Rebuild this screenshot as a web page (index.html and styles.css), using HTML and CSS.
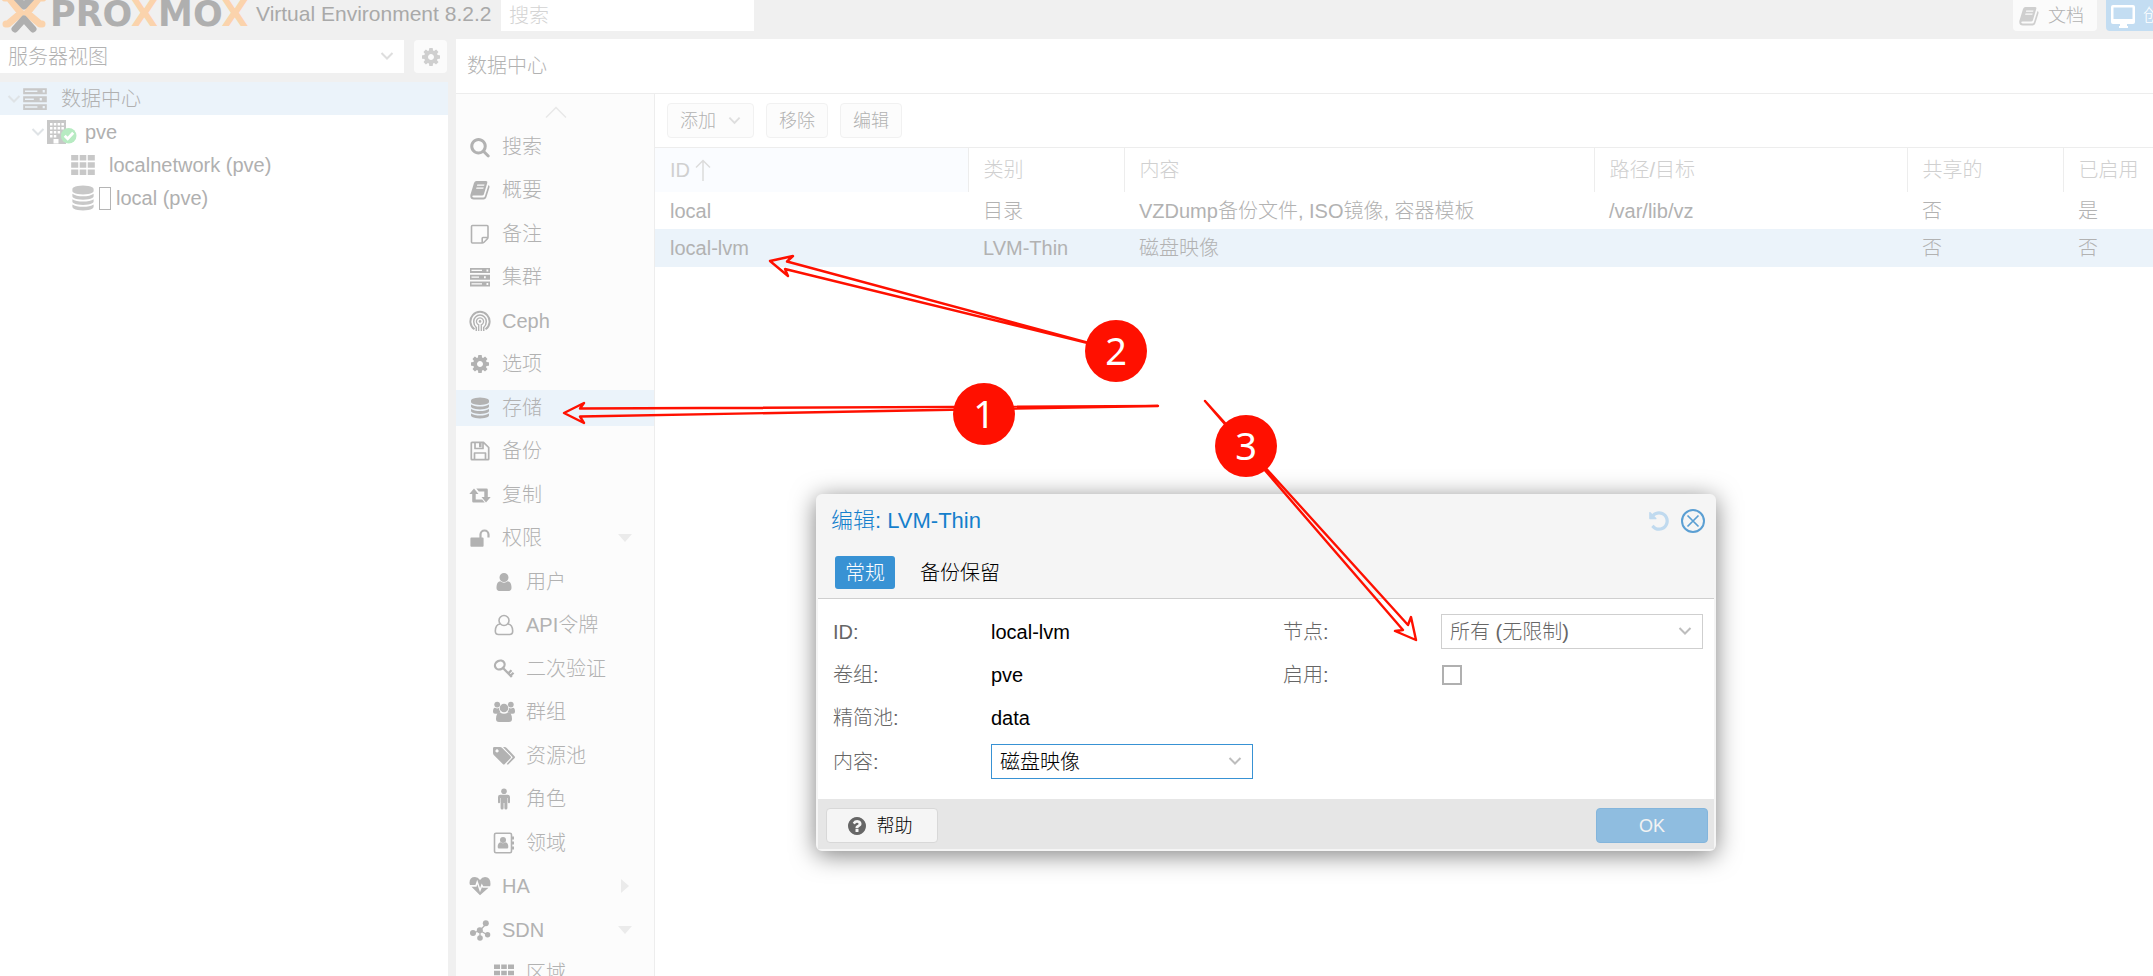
FILE: index.html
```html
<!DOCTYPE html>
<html lang="zh-CN">
<head>
<meta charset="utf-8">
<title>Proxmox Virtual Environment</title>
<link rel="stylesheet" href="styles.css">
</head>
<body>
<svg class="sprite" aria-hidden="true">
  <symbol id="chevron" viewBox="0 0 14 14"><path d="M1.5 4 7 9.5 12.500 4" fill="none" stroke="currentColor" stroke-width="2"/></symbol>
  <symbol id="search" viewBox="-43 -43 1878 1878"><path d="M1216 832q0-185-131.500-316.500t-316.500-131.500-316.500 131.500-131.500 316.500 131.500 316.500 316.500 131.500 316.500-131.500 131.500-316.500zm512 832q0 52-38 90t-90 38q-54 0-90-38l-343-342q-179 124-399 124-143 0-273.500-55.500t-225-150-150-225-55.500-273.500 55.500-273.500 150-225 225-150 273.500-55.500 273.500 55.500 225 150 150 225 55.500 273.500q0 220-124 399l343 343q37 37 37 90z"/></symbol>
  <symbol id="cog" viewBox="-43 -43 1878 1878"><path d="M1152 896q0-106-75-181t-181-75-181 75-75 181 75 181 181 75 181-75 75-181zm512-109v222q0 12-8 23t-20 13l-185 28q-19 54-39 91 35 50 107 138 10 12 10 25t-9 23q-27 37-99 108t-94 71q-12 0-26-9l-138-108q-44 23-91 38-16 136-29 186-7 28-36 28h-222q-14 0-24.500-8.500t-11.500-21.500l-28-184q-49-16-90-37l-141 107q-10 9-25 9-14 0-25-11-126-114-165-168-7-10-7-23 0-12 8-23 15-21 51-66.500t54-70.500q-27-50-41-99l-183-27q-13-2-21-12.500t-8-23.500v-222q0-12 8-23t19-13l186-28q14-46 39-92-40-57-107-138-10-12-10-24 0-10 9-23 26-36 98.500-107.500t94.500-71.500q13 0 26 10l138 107q44-23 91-38 16-136 29-186 7-28 36-28h222q14 0 24.500 8.500t11.500 21.500l28 184q49 16 90 37l142-107q9-9 24-9 13 0 25 10 129 119 165 170 7 8 7 22 0 12-8 23-15 21-51 66.500t-54 70.500q26 50 41 98l183 28q13 2 21 12.500t8 23.500z"/></symbol>
  <symbol id="database" viewBox="-43 -43 1878 1878"><path d="M896 768q237 0 443-43t325-127v170q0 69-103 128t-280 93.500-385 34.500-385-34.500-280-93.500-103-128v-170q119 84 325 127t443 43zm0 768q237 0 443-43t325-127v170q0 69-103 128t-280 93.500-385 34.500-385-34.500-280-93.500-103-128v-170q119 84 325 127t443 43zm0-384q237 0 443-43t325-127v170q0 69-103 128t-280 93.500-385 34.500-385-34.500-280-93.500-103-128v-170q119 84 325 127t443 43zm0-1152q208 0 385 34.500t280 93.500 103 128v128q0 69-103 128t-280 93.500-385 34.500-385-34.500-280-93.500-103-128v-128q0-69 103-128t280-93.500 385-34.500z"/></symbol>
  <symbol id="book" viewBox="0 0 22 22"><path fill-rule="evenodd" d="M7.500 2H17q1.800 0 1.300 1.800l-3.400 11.400Q14.500 16.500 13 16.500H4.500q-1.500 0-1.200 1 .3 1 1.700 1h9.300q1.200 0 1.600-1.200L19.500 6q1.400.8 1 2.200l-3.200 10.300Q16.600 20.500 14.500 20.500H4.800Q1.500 20.500 1.300 17.200q-.1-1.200.5-2.700L5 4Q5.700 2 7.500 2zM8.300 5.500 7.900 6.800h7.200l.4-1.300zM7.500 8.400 7.100 9.700h7.200l.4-1.300z"/></symbol>
  <symbol id="note" viewBox="0 0 22 22"><path fill="none" stroke="currentColor" stroke-width="1.600" stroke-linejoin="round" d="M19 14V3.600Q19 2.500 18 2.500H3.500q-1 0-1 1V19q0 1 1 1H13q1.200 0 2-.8L18.200 16q.8-.8.8-2zM19 14.500h-5q-.8 0-.8.800V20"/></symbol>
  <symbol id="server" viewBox="0 0 22 22"><path fill-rule="evenodd" d="M1 2h20v5H1zM2.500 3.800v1.300H13V3.800zM17.500 3.400v2h1.800v-2zM1 8.700h20v5H1zm1.500 1.800v1.300H10v-1.300zM15 10.200v2h1.800v-2zM1 15.400h20v5H1zm1.500 1.800v1.300H13v-1.300zM17.500 16.900v2h1.800v-2z"/></symbol>
  <symbol id="ceph" viewBox="0 0 22 22"><g fill="none" stroke="currentColor"><path stroke-width="2" d="M5.500 19.300A9.600 9.600 0 1 1 16.500 19.300"/><path stroke-width="1.500" d="M7.300 21v-3.500Q4.700 15 4.700 11.400a6.300 6.300 0 0 1 12.600 0q0 3.600-2.600 6.100V21"/><path stroke-width="1.300" d="M9.700 21v-6.200A3.600 3.600 0 1 1 12.300 14.800V21"/></g><circle cx="11" cy="11.400" r="1.300"/></symbol>
  <symbol id="save" viewBox="0 0 22 22"><path fill="none" stroke="currentColor" stroke-width="1.700" stroke-linejoin="round" d="M2.300 3q0-.7.7-.7h11.500L19.700 7.500V19q0 .7-.7.700H3q-.7 0-.7-.7zM6 2.500V8.500h8V2.500M5.500 19.500v-6.500h11v6.500"/><path d="M10 3h2.600v4.300H10z"/></symbol>
  <symbol id="retweet" viewBox="0 0 22 22"><path d="M5 4.500 9.500 10H6.700v5.500h6.500l2.600 3H4.500q-1.300 0-1.300-1.300V10H.3zM7.300 4.500H17.500q1.300 0 1.300 1.300V13h2.900L17 18.500 12.500 13h2.800V7.500H9.800z"/></symbol>
  <symbol id="unlock" viewBox="0 0 22 22"><path d="M2.400 10.500h11.200q1 0 1 1v7.300q0 1-1 1H2.400q-1 0-1-1v-7.300q0-1 1-1z"/><path fill="none" stroke="currentColor" stroke-width="2.200" d="M11.500 11V7.500a4 4 0 0 1 8 0V10.500"/></symbol>
  <symbol id="user" viewBox="-43 -43 1878 1878"><path d="M1536 1399q0 109-62.500 187t-150.500 78h-854q-88 0-150.500-78t-62.500-187q0-85 8.500-160.500t31.500-152 58.500-131 94-89 134.500-34.500q131 128 313 128t313-128q76 0 134.500 34.500t94 89 58.500 131 31.500 152 8.500 160.500zm-256-887q0 159-112.500 271.500t-271.500 112.500-271.500-112.500-112.500-271.500 112.500-271.500 271.500-112.500 271.500 112.500 112.500 271.500z"/></symbol>
  <symbol id="user-o" viewBox="0 0 22 22"><g fill="none" stroke="currentColor" stroke-width="1.600"><circle cx="11" cy="6.500" r="5"/><path d="M7 10q-4.500.5-4.700 7Q2.300 20.500 5.500 20.500h11q3.200 0 3.200-3.500-.2-6.500-4.700-7"/></g></symbol>
  <symbol id="key" viewBox="0 0 22 22"><ellipse cx="6.800" cy="7" rx="5" ry="4.200" transform="rotate(-30 6.800 7)" fill="none" stroke="currentColor" stroke-width="2.300"/><path fill="none" stroke="currentColor" stroke-width="2.300" d="M10 10 18.800 19M15.500 15.200l3-3M17.500 17.800l3-3"/></symbol>
  <symbol id="group" viewBox="0 0 22 22"><circle cx="4.200" cy="3.600" r="2.900"/><circle cx="17.800" cy="3.600" r="2.900"/><circle cx="11" cy="7" r="4.300"/><path d="M2 6.800q2 1.200 4 .3 0 2.600 1.500 4.200-2 0-3 1.500H2q-2 0-2-2Q0 7 2 6.800zM20 6.800q-2 1.200-4 .3 0 2.600-1.500 4.200 2 0 3 1.500H20q2 0 2-2 0-3.800-2-4zM7 11.500q4 2.600 8 0 4 .3 4 6.500 0 3-3 3H6q-3 0-3-3 0-6.200 4-6.500z"/></symbol>
  <symbol id="tags" viewBox="0 0 22 22"><path fill-rule="evenodd" d="M1.300 2H7q1.300 0 2.200.9l8.300 8.300q1 1 0 2L11.800 19q-1 1-2 0L1 10.300Q0 9.200 0 8V3.300Q0 2 1.300 2zM4 4.300a1.600 1.600 0 1 0 .1 0z"/><path d="M10 2h1.500q1.200 0 2.200.9l7.800 8.300q1 1 0 2L15.700 19q-1 1-2 0l6-6.700z"/></symbol>
  <symbol id="male" viewBox="0 0 22 22"><circle cx="11" cy="3.300" r="2.800"/><path d="M7.300 6.700h7.400q2.300 0 2.300 2.300v5q0 1.200-1 1.200t-1.100-1.200V10h-.5v10q0 1.500-1.500 1.500t-1.500-1.500v-5h-.8v5q0 1.500-1.500 1.500T7.600 20V10h-.5v4q0 1.200-1.100 1.200T5 14V9q0-2.300 2.300-2.300z"/></symbol>
  <symbol id="address" viewBox="0 0 22 22"><path fill="none" stroke="currentColor" stroke-width="1.600" d="M3 1.300h14q1.500 0 1.500 1.500v16.400q0 1.500-1.500 1.500H3q-1.500 0-1.500-1.500V2.800q0-1.500 1.500-1.500z"/><path d="M19 4.500h2v3h-2zM19 9.500h2v3h-2zM19 14.500h2v3h-2z"/><circle cx="10" cy="8" r="3"/><path d="M7.500 10.300q2.500 1.700 5 0 2.800.5 2.800 4.700 0 1.500-1.300 1.500H6q-1.300 0-1.300-1.500 0-4.200 2.800-4.700z"/></symbol>
  <symbol id="heart" viewBox="0 0 22 22"><path d="M11 5Q9 2 6 2 .5 2 .5 7.800q0 1 .5 2.200h5.400l1.800-5.300 2.900 8.300 1.600-4.400 1.600 2.600h6.800q.4-1.200.4-2.200Q21.500 2 16 2q-3 0-5 3z"/><path d="M2.500 11.800H7.500l.8-2.500 2.700 8 2-5.200.5.700h6l-8.500 7.500z"/></symbol>
  <symbol id="sdn" viewBox="0 0 22 22"><path fill="none" stroke="currentColor" stroke-width="1.300" d="M4 14 11 11.500 17 5M11 11.500 18.500 16M11 11.500V18"/><circle cx="4" cy="14" r="3"/><circle cx="10.800" cy="11.300" r="3"/><circle cx="16.800" cy="4.300" r="3"/><circle cx="18.600" cy="15.800" r="2.700"/><circle cx="11" cy="19" r="2.800"/></symbol>
  <symbol id="th" viewBox="0 0 22 22"><path d="M1 2.500h6v4.600H1zM8.200 2.500h5.600v4.600H8.200zM15 2.500h6v4.600h-6zM1 8.700h6v4.600H1zM8.200 8.700h5.600v4.600H8.200zM15 8.700h6v4.600h-6zM1 14.900h6v4.600H1zM8.200 14.900h5.600v4.600H8.200zM15 14.900h6v4.600h-6z"/></symbol>
  <symbol id="building" viewBox="0 0 31 26"><path fill-rule="evenodd" d="M1 1h19v24H1zM4 4v2.500h2.500V4zm3.800 0v2.500h2.500V4zm3.800 0v2.500h2.500V4zm3.800 0v2.500h2.500V4zM4 8v2.500h2.500V8zm3.800 0v2.500h2.500V8zm3.800 0v2.500h2.500V8zm3.800 0v2.500h2.500V8zM4 12v2.500h2.500V12zm3.800 0v2.500h2.500V12zm3.800 0v2.500h2.500V12zM4 16v2.500h2.500V16zm3.800 0v2.500h2.500V16zM7.500 20v4.500h5V20z"/><circle cx="22.700" cy="16.700" r="7.800" fill="#b7ebc2"/><path d="m18.700 16.700 3 3 5.500-6" fill="none" stroke="#fff" stroke-width="2.800"/></symbol>
  <symbol id="undo" viewBox="-43 -43 1878 1878"><path d="M1664 896q0 156-61 298t-164 245-245 164-298 61q-172 0-327-72.500t-264-204.500q-7-10-6.500-22.500t8.500-20.500l137-138q10-9 25-9 16 2 23 12 73 95 179 147t225 52q104 0 198.500-40.500t163.500-109.500 109.500-163.500 40.500-198.500-40.500-198.500-109.500-163.500-163.500-109.500-198.500-40.500q-98 0-188 35.500t-160 101.500l137 138q31 30 14 69-17 40-59 40h-448q-26 0-45-19t-19-45v-448q0-42 40-59 39-17 69 14l130 129q107-101 244.500-156.500t284.500-55.500q156 0 298 61t245 164 164 245 61 298z"/></symbol>
  <symbol id="close" viewBox="0 0 26 26"><g fill="none" stroke="currentColor"><circle cx="13" cy="13" r="11" stroke-width="2"/><path stroke-width="1.700" d="m7.500 7.500 11 11m0-11-11 11"/></g></symbol>
  <symbol id="question" viewBox="-43 -43 1878 1878"><path d="M1024 1376v-192q0-14-9-23t-23-9h-192q-14 0-23 9t-9 23v192q0 14 9 23t23 9h192q14 0 23-9t9-23zm256-672q0-88-55.500-163t-138.500-116-170-41q-243 0-371 213-15 24 8 42l132 100q7 6 19 6 16 0 25-12 53-68 86-92 34-24 86-24 48 0 85.500 26t37.500 59q0 38-20 61t-68 45q-63 28-115.500 86.500t-52.500 125.500v36q0 14 9 23t23 9h192q14 0 23-9t9-23q0-19 21.500-49.500t54.500-49.500q32-18 49-28.500t46-35 44.500-48 28-60.500 12.500-81zm384 192q0 209-103 385.500t-279.500 279.500-385.500 103-385.500-103-279.500-279.500-103-385.500 103-385.500 279.500-279.500 385.500-103 385.500 103 279.500 279.500 103 385.500z"/></symbol>
  <symbol id="desktop" viewBox="0 0 24 24"><path fill-rule="evenodd" d="M2 1h20q2 0 2 2v15q0 2-2 2h-6v2h1v2H8v-2h1v-2H2q-2 0-2-2V3q0-2 2-2zM2.500 3.500v11.500h19V3.500z"/></symbol>
  <symbol id="mark" viewBox="0 0 46 33"><g fill="none" stroke-width="7" stroke-linecap="round" stroke-linejoin="round"><path stroke="#fbd3ac" d="M4-2h4l12 15L7 24H5M42-2h-4L26 13 39 24h2"/><path stroke="#afafaf" d="M14-4 23 6l9-10M14 29l9-10 9 10"/></g></symbol>
</svg>

<header class="topbar">
  <svg class="mark"><use href="#mark"/></svg>
  <div class="wordmark">PRO<span>X</span>MO<span>X</span></div>
  <div class="version">Virtual Environment 8.2.2</div>
  <input class="top-search" type="text" placeholder="搜索" aria-label="搜索">
  <div class="top-actions">
    <button class="top-btn"><svg class="icon"><use href="#book"/></svg>文档</button>
    <button class="top-btn primary"><svg class="icon"><use href="#desktop"/></svg>创</button>
  </div>
</header>

<div class="workspace">
  <aside class="side">
    <div class="side-tools">
      <div class="combo view-combo">
        <select aria-label="视图"><option>服务器视图</option></select>
        <svg class="chev"><use href="#chevron"/></svg>
      </div>
      <button class="gear" aria-label="设置"><svg class="icon"><use href="#cog"/></svg></button>
    </div>
    <ul class="tree">
      <li class="lvl1 selected"><svg class="exp"><use href="#chevron"/></svg><svg class="node"><use href="#server"/></svg><span>数据中心</span></li>
      <li class="lvl2"><svg class="exp"><use href="#chevron"/></svg><svg class="node host"><use href="#building"/></svg><span>pve</span></li>
      <li class="lvl3"><svg class="node"><use href="#th"/></svg><span>localnetwork (pve)</span></li>
      <li class="lvl3 disk"><svg class="node"><use href="#database"/></svg><i class="tofu"></i><span>local (pve)</span></li>
    </ul>
  </aside>

  <main class="content">
    <h1 class="crumb">数据中心</h1>
    <div class="split">
      <nav class="menu">
        <div class="scroll-up"><svg viewBox="0 0 22 12"><path d="M1 11.500 11 1.500l10 10" fill="none" stroke="currentColor" stroke-width="1.500"/></svg></div>
        <ul>
          <li><svg class="icon"><use href="#search"/></svg>搜索</li>
          <li><svg class="icon"><use href="#book"/></svg>概要</li>
          <li><svg class="icon"><use href="#note"/></svg>备注</li>
          <li><svg class="icon"><use href="#server"/></svg>集群</li>
          <li><svg class="icon"><use href="#ceph"/></svg>Ceph</li>
          <li><svg class="icon"><use href="#cog"/></svg>选项</li>
          <li class="selected"><svg class="icon"><use href="#database"/></svg>存储</li>
          <li><svg class="icon"><use href="#save"/></svg>备份</li>
          <li><svg class="icon"><use href="#retweet"/></svg>复制</li>
          <li><svg class="icon"><use href="#unlock"/></svg>权限<i class="tri down"></i></li>
          <li class="sub"><svg class="icon"><use href="#user"/></svg>用户</li>
          <li class="sub"><svg class="icon"><use href="#user-o"/></svg>API令牌</li>
          <li class="sub"><svg class="icon"><use href="#key"/></svg>二次验证</li>
          <li class="sub"><svg class="icon"><use href="#group"/></svg>群组</li>
          <li class="sub"><svg class="icon"><use href="#tags"/></svg>资源池</li>
          <li class="sub"><svg class="icon"><use href="#male"/></svg>角色</li>
          <li class="sub"><svg class="icon"><use href="#address"/></svg>领域</li>
          <li><svg class="icon"><use href="#heart"/></svg>HA<i class="tri right"></i></li>
          <li><svg class="icon"><use href="#sdn"/></svg>SDN<i class="tri down"></i></li>
          <li class="sub"><svg class="icon"><use href="#th"/></svg>区域</li>
        </ul>
      </nav>

      <section class="storage">
        <div class="toolbar">
          <button class="tool">添加<svg class="tool-chev"><use href="#chevron"/></svg></button>
          <button class="tool">移除</button>
          <button class="tool">编辑</button>
        </div>
        <table class="grid">
          <colgroup><col class="c-id"><col class="c-type"><col class="c-content"><col class="c-path"><col class="c-shared"><col class="c-enabled"></colgroup>
          <thead>
            <tr><th class="sorted"><span class="sort">ID<svg viewBox="0 0 16 22"><path d="M8 22V2M1 8.500 8 1.500l7 7" fill="none" stroke="currentColor" stroke-width="1.500"/></svg></span></th><th>类别</th><th>内容</th><th>路径/目标</th><th>共享的</th><th>已启用</th></tr>
          </thead>
          <tbody>
            <tr><td>local</td><td>目录</td><td>VZDump备份文件, ISO镜像, 容器模板</td><td>/var/lib/vz</td><td>否</td><td>是</td></tr>
            <tr class="selected"><td>local-lvm</td><td>LVM-Thin</td><td>磁盘映像</td><td></td><td>否</td><td>否</td></tr>
          </tbody>
        </table>
      </section>
    </div>
  </main>
</div>

<div class="dialog" role="dialog" aria-labelledby="dialog-title">
  <div class="dialog-head">
    <div class="title-row">
      <h2 id="dialog-title">编辑: LVM-Thin</h2>
      <button class="plain undo" aria-label="重置"><svg><use href="#undo"/></svg></button>
      <button class="plain close" aria-label="关闭"><svg><use href="#close"/></svg></button>
    </div>
    <div class="tabs">
      <button class="tab active">常规</button>
      <button class="tab">备份保留</button>
    </div>
  </div>
  <div class="dialog-body">
    <div class="fields">
      <span class="label">ID:</span><span class="value">local-lvm</span>
      <span class="label">卷组:</span><span class="value">pve</span>
      <span class="label">精简池:</span><span class="value">data</span>
      <label class="label" for="f-content">内容:</label>
      <div class="combo focus"><select id="f-content"><option>磁盘映像</option></select><svg class="chev"><use href="#chevron"/></svg></div>
    </div>
    <div class="fields">
      <label class="label" for="f-nodes">节点:</label>
      <div class="combo muted"><select id="f-nodes"><option>所有 (无限制)</option></select><svg class="chev"><use href="#chevron"/></svg></div>
      <label class="label" for="f-enable">启用:</label>
      <input id="f-enable" class="check" type="checkbox">
    </div>
  </div>
  <div class="dialog-foot">
    <button class="foot-btn help"><svg class="icon"><use href="#question"/></svg>帮助</button>
    <button class="foot-btn ok">OK</button>
  </div>
</div>

<svg class="notes" width="1500" height="700">
  <g class="arrows">
    <path d="M1158 406 580 408.500 584 403 564 413 584 423 580 416.500z"/>
    <path d="M1100 346 787 261.500 793 256 770 261 788 276 785 269z"/>
    <path d="M1205 401 1408 625 1411 617 1416 640 1395 631 1403 630z"/>
  </g>
  <circle cx="984" cy="414" r="31"/><circle cx="1116" cy="351" r="31"/><circle cx="1246" cy="446" r="31"/>
  <g class="digits"><text x="984" y="428">1</text><text x="1116" y="365">2</text><text x="1246" y="460">3</text></g>
</svg>
</body>
</html>
```
FILE: styles.css
```css
* { box-sizing: border-box; }

body {
  margin: 0;
  height: 100vh;
  overflow: hidden;
  display: flex;
  flex-direction: column;
  background: #f0f0f0;
  color: #b2b2b2;
  font-family: "Liberation Sans", "Noto Sans CJK SC", sans-serif;
  font-size: 20px;
  font-weight: 300;
  line-height: 24px;
}

button, input, select { font: inherit; color: inherit; margin: 0; }
button { cursor: pointer; }
h1, h2, ul { margin: 0; padding: 0; font-size: inherit; font-weight: inherit; }
ul { list-style: none; }
svg { fill: currentColor; flex: none; }
.sprite { position: absolute; width: 0; height: 0; }
.icon { width: 22px; height: 22px; overflow: visible; }

/* top bar */
.topbar { display: flex; height: 39px; flex: none; padding-bottom: 8px; }
.mark { width: 46px; height: 33px; margin-left: 1px; }
.wordmark {
  width: 205px;
  margin-left: 3px;
  font: bold 35px/28px "DejaVu Sans", sans-serif;
  color: #afafaf;
  white-space: nowrap;
}
.wordmark span { color: #fbd3ac; }
.version { width: 246px; padding-left: 1px; font-size: 21px; line-height: 28px; white-space: nowrap; color: #a9a9a9; }
.top-search { width: 253px; border: 0; padding: 0 8px; background: #fff; outline: 0; }
.top-search::placeholder { color: #d3d3d3; opacity: 1; }
.top-actions { width: 140px; margin-left: auto; display: flex; gap: 9px; overflow: hidden; }
.top-btn {
  display: flex;
  align-items: center;
  gap: 8px;
  flex: none;
  height: 31px;
  padding: 0 13px 0 5px;
  border: 0;
  border-radius: 0 0 4px 4px;
  background: #fbfbfb;
  font-size: 18px;
  white-space: nowrap;
}
.top-btn .icon { color: #cfcfcf; }
.top-btn.primary { background: #c3ddf2; color: #fff; }
.top-btn.primary .icon { color: #fff; width: 24px; height: 24px; }

/* workspace */
.workspace { display: flex; flex: 1; min-height: 0; }
.side { display: flex; flex-direction: column; width: 448px; margin-right: 8px; flex: none; }
.side-tools { display: flex; gap: 10px; padding: 1px 1px 9px 0; }
.combo { position: relative; display: flex; background: #fff; }
.combo select {
  flex: 1;
  height: 33px;
  padding: 0 36px 0 8px;
  border: 0;
  background: transparent;
  appearance: none;
  outline: 0;
  opacity: 1;
}
.combo .chev { position: absolute; right: 10px; top: 9px; width: 14px; height: 14px; pointer-events: none; color: #bdbdbd; }
.view-combo { flex: 1; }
.view-combo .chev { color: #dedede; }
.gear {
  display: flex;
  align-items: center;
  justify-content: center;
  width: 33px;
  padding: 0;
  border: 0;
  border-radius: 4px;
  background: #fbfbfb;
  color: #cfcfcf;
}

.tree { flex: 1; background: #fff; }
.tree li { display: flex; align-items: center; height: 33px; padding-top: 1px; color: #b0b0b0; }
.tree .selected { background: #ebf3fa; }
.tree .lvl1 { padding-left: 6px; }
.tree .lvl2 { padding-left: 30px; }
.tree .lvl3 { padding-left: 70px; }
.exp { width: 16px; height: 14px; color: #dfe3e6; }
.node { width: 26px; height: 26px; margin-right: 13px; color: #c8c8c8; overflow: visible; }
.host { width: 31px; margin-right: 8px; }
.disk .node { margin-right: 3px; }
.tofu { width: 12px; height: 23px; margin-right: 5px; border: 1px solid #b5b5b5; }

.content { display: flex; flex-direction: column; flex: 1; min-width: 0; background: #fff; }
.crumb { height: 55px; flex: none; padding: 0 11px; line-height: 55px; border-bottom: 1px solid #ededed; }
.split { display: flex; flex: 1; min-height: 0; }

.menu { width: 199px; flex: none; background: #fcfcfc; border-right: 1px solid #ededed; overflow: hidden; }
.scroll-up { height: 35px; padding: 12px 0 0 89px; color: #e8e8e8; }
.scroll-up svg { display: block; width: 22px; height: 12px; }
.menu li { display: flex; align-items: center; gap: 11px; height: 36px; margin-bottom: 7px; padding: 0 18px 0 13px; }
.menu li:nth-child(even) { margin-bottom: 8px; }
.menu .sub { padding-left: 37px; }
.menu .selected { background: #ebf3fa; }
.tri { margin-left: auto; border: 7px solid transparent; }
.tri.down { border-top: 8px solid #ebebeb; border-bottom: 0; margin-right: 4px; }
.tri.right { border-left: 8px solid #ebebeb; border-right: 0; margin-right: 7px; }

.storage { flex: 1; min-width: 0; }
.toolbar { display: flex; gap: 12px; padding: 9px 12px; height: 54px; border-bottom: 1px solid #ededed; }
.tool {
  display: flex;
  align-items: center;
  gap: 12px;
  height: 35px;
  padding: 0 12px;
  border: 1px solid #f1f1f1;
  border-radius: 4px;
  background: #fcfcfc;
  font-size: 18px;
}
.tool-chev { width: 13px; height: 13px; color: #dedede; }

.grid { width: 100%; table-layout: fixed; border-collapse: collapse; }
.c-id, .c-path { width: 313px; }
.c-type, .c-shared { width: 156px; }
.c-enabled { width: 90px; }
.grid th, .grid td { padding: 0 0 0 15px; text-align: left; white-space: nowrap; overflow: hidden; font-weight: 300; }
.grid th { height: 44px; border-right: 1px solid #ededed; color: #d0d0d0; }
.grid th:last-child { border-right: 0; }
.grid th.sorted { background: #fafcff; }
.sort { display: flex; align-items: center; gap: 5px; }
.sort svg { width: 16px; height: 22px; color: #dcdcdc; }
.grid td { height: 37px; }
.grid .selected td { height: 38px; background: #ebf3fa; }

/* edit window */
.dialog {
  position: absolute;
  left: 816px;
  top: 494px;
  width: 900px;
  border: 2px solid #f5f5f5;
  border-radius: 6px;
  background: #fff;
  color: #000;
  box-shadow: 0 4px 25px rgba(0, 0, 0, .5);
}
.dialog-head { background: #f5f5f5; border-bottom: 1px solid #cfcfcf; padding: 9px 8px 9px 13px; }
.title-row { display: flex; align-items: center; height: 32px; }
.title-row h2 { flex: 1; font-size: 22px; color: #157fcc; }
.plain { display: flex; padding: 0; border: 0; background: none; }
.undo { margin-right: 9px; color: #c0daef; }
.undo svg { width: 24px; height: 24px; }
.close { color: #5b9fd3; }
.close svg { width: 26px; height: 26px; }
.tabs { display: flex; gap: 15px; padding: 19px 0 0 4px; }
.tab { height: 33px; padding: 0 10px; border: 0; border-radius: 3px; background: none; }
.tab.active { background: #3892d4; color: #fff; }
.dialog-body { display: grid; grid-template-columns: 1fr 1fr; gap: 30px; padding: 15px 11px 20px 15px; }
.fields { display: grid; grid-template-columns: 158px 1fr; grid-template-rows: 35px 35px 36px 35px; row-gap: 8px; align-items: center; }
.label { color: #666; }
.dialog .combo { border: 1px solid #cfcfcf; }
.dialog .combo.focus { border-color: #3892d4; }
.dialog .muted { color: #666; }
.check { appearance: none; width: 20px; height: 20px; margin-left: 1px; border: 2px solid #b0b0b0; background: #fff; }
.dialog-foot { display: flex; justify-content: space-between; padding: 9px 6px 6px 8px; background: #e6e6e6; }
.foot-btn {
  display: flex;
  align-items: center;
  justify-content: center;
  gap: 9px;
  width: 112px;
  height: 35px;
  padding: 0;
  border: 1px solid #d8d8d8;
  border-radius: 4px;
  background: #f5f5f5;
  font-size: 18px;
}
.foot-btn.help { padding-right: 6px; }
.foot-btn .icon { color: #666; }
.foot-btn.ok { background: #8fbde0; border-color: #83b5dc; color: #f3f3f3; }

/* numbered callouts drawn over the page */
.notes { position: absolute; left: 0; top: 0; pointer-events: none; fill: #ff1000; }
.arrows { fill: none; stroke: #ff1000; stroke-width: 2.4; stroke-linejoin: round; }
.digits { fill: #fff; font: 400 38px "Noto Sans", sans-serif; text-anchor: middle; }
```
